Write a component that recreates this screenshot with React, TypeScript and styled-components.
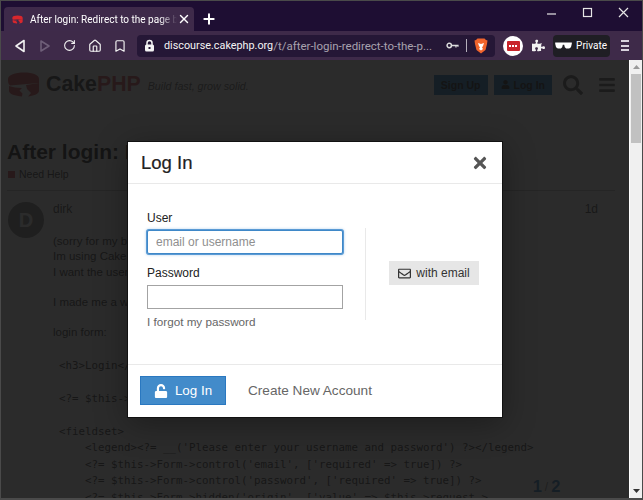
import styled, { createGlobalStyle } from "styled-components";
import { FaBars, FaPuzzlePiece, FaRegEnvelope, FaSearch, FaTimes, FaUnlock, FaUser } from "react-icons/fa";
import { Bookmark, Home, Plus, RotateCw, X } from "lucide-react";

const Global = createGlobalStyle`
  html, body { margin: 0; padding: 0; height: 500px; overflow: hidden; background: #2a2a2a; }
  * { box-sizing: border-box; }
`;

const Windowed = styled.div`
  width: 643px;
  height: 500px;
  display: flex;
  flex-direction: column;
  border: 1px solid #4a4a4a;
  border-bottom-width: 2px;
  font-family: "Liberation Sans", Arial, sans-serif;
  overflow: hidden;
`;

/* browser chrome */
const TabStrip = styled.div`
  height: 30px;
  flex: none;
  display: flex;
  align-items: flex-end;
  padding-left: 3px;
  background: #1e0e33;
  color: #fff;
`;

const Tab = styled.div`
  width: 190px;
  height: 24px;
  display: flex;
  align-items: center;
  padding: 0 3px 0 8px;
  background: #3e2a4a;
  border-radius: 4px 4px 0 0;
  font-family: Roboto, sans-serif;
  font-size: 10px;
`;

const TabTitle = styled.span`
  flex: 1;
  margin-left: 7px;
  white-space: nowrap;
  overflow: hidden;
  -webkit-mask-image: linear-gradient(to right, #000 88%, transparent);
  mask-image: linear-gradient(to right, #000 88%, transparent);
`;

const NewTab = styled.div`
  width: 30px;
  height: 24px;
  display: flex;
  align-items: center;
  justify-content: center;
`;

const WindowControls = styled.div`
  margin-left: auto;
  height: 24px;
  align-self: flex-start;
  display: flex;
  align-items: center;
  gap: 22px;
  padding-right: 11px;
`;

const Toolbar = styled.div`
  height: 29px;
  flex: none;
  display: flex;
  align-items: center;
  background: #3e2a49;
  color: #f2f2f2;
`;

const NavSlot = styled.div`
  width: 25px;
  height: 29px;
  flex: none;
  display: flex;
  align-items: center;
  justify-content: center;
`;

const NavGroup = styled.div`
  display: flex;
  align-items: center;
  padding-left: 6px;
  margin-right: 5px;
`;

const UrlBar = styled.div`
  width: 358px;
  height: 22px;
  flex: none;
  display: flex;
  align-items: center;
  padding: 0 7px;
  background: #251736;
  border-radius: 4px;
  font-family: Roboto, sans-serif;
`;

const Host = styled.span`
  margin-left: 9px;
  font-size: 10.8px;
  color: #f4f4f4;
  white-space: nowrap;
`;

const UrlPath = styled.span`
  font-size: 11.5px;
  color: #a8a2ae;
  white-space: nowrap;
`;

const UrlIcons = styled.div`
  margin-left: auto;
  display: flex;
  align-items: center;
  gap: 7px;
`;

const UrlRule = styled.div`
  width: 1px;
  height: 13px;
  background: #b5afbb;
`;

const ExtBadge = styled.div`
  width: 20px;
  height: 20px;
  margin-left: 8px;
  flex: none;
  border-radius: 50%;
  background: #fff;
  display: flex;
  align-items: center;
  justify-content: center;
`;

const ExtInner = styled.div`
  width: 13px;
  height: 10px;
  border-radius: 1px;
  background: #c9252b;
  display: flex;
  align-items: center;
  justify-content: center;
  gap: 1px;
`;

const Dot = styled.i`
  width: 2px;
  height: 2px;
  background: #fff;
`;

const Puzzle = styled.div`
  margin-left: 9px;
  flex: none;
  display: flex;
  color: #f2f2f2;
`;

const PrivateBadge = styled.div`
  width: 57px;
  height: 22px;
  margin-left: 8px;
  flex: none;
  display: flex;
  align-items: center;
  justify-content: space-between;
  padding: 0 3px 0 2px;
  border-radius: 4px;
  background: #1f1e24;
  font-family: Roboto, sans-serif;
  font-size: 10px;
  color: #fff;
`;

const Menu = styled.div`
  margin-left: 11px;
  flex: none;
  display: flex;
  flex-direction: column;
  gap: 2.5px;
`;

const MenuLine = styled.i`
  display: block;
  width: 8px;
  height: 2px;
  background: #d8d2dc;
`;

/* page behind the modal */
const Viewport = styled.div`
  flex: 1;
  display: flex;
  min-height: 0;
  position: relative;
`;

const Page = styled.div`
  flex: 1;
  min-width: 0;
  position: relative;
  background: #fff;
  overflow: hidden;
`;

const PageInner = styled.div`
  padding: 11px 0 0 6px;
`;

const SiteHeader = styled.div`
  height: 27px;
  display: flex;
  align-items: center;
  padding-right: 13px;
`;

const Wordmark = styled.div`
  margin-left: 6px;
  font-size: 21.3px;
  font-weight: 700;
  color: #222;
`;

const Php = styled.span`
  color: #d33c43;
`;

const Tagline = styled.div`
  margin-left: 7px;
  margin-top: 3px;
  font-size: 10.7px;
  font-style: italic;
  color: #555;
`;

const HeaderButton = styled.div<{ $first?: boolean }>`
  height: 20px;
  margin-left: ${(p) => (p.$first ? "auto" : "6px")};
  padding: 0 7px;
  display: flex;
  align-items: center;
  gap: 4px;
  background: #0f6fb8;
  color: #000;
  font-size: 10.5px;
  font-weight: 700;
`;

const HeaderIcon = styled.div<{ $gap: number }>`
  margin-left: ${(p) => p.$gap}px;
  display: flex;
  color: #555;
`;

const TopicTitle = styled.h1`
  margin: 40px 0 0 0;
  font-size: 21px;
  line-height: 28px;
  font-weight: 700;
  color: #000;
  white-space: nowrap;
`;

const Category = styled.div`
  display: flex;
  align-items: center;
  gap: 4px;
  font-size: 10.5px;
  line-height: 16px;
  padding-left: 1px;
  color: #222;
`;

const Square = styled.i`
  width: 7px;
  height: 7px;
  background: #d33c43;
`;

const Rule = styled.div`
  height: 1px;
  margin: 8px 14px 0 0;
  background: #bbb;
`;

const Post = styled.div`
  display: flex;
  padding-top: 11px;
  padding-right: 31px;
`;

const Avatar = styled.div`
  width: 36px;
  height: 36px;
  margin-left: 1px;
  flex: none;
  border-radius: 50%;
  background: #777;
  color: #fff;
  font-size: 20px;
  font-weight: 700;
  display: flex;
  align-items: center;
  justify-content: center;
`;

const PostBody = styled.div`
  flex: 1;
  min-width: 0;
  margin-left: 9px;
`;

const PostMeta = styled.div`
  display: flex;
  justify-content: space-between;
  font-size: 12px;
  line-height: 15px;
  color: #333;
`;

const Para = styled.p`
  margin: 0 0 14.5px;
  font-size: 11.5px;
  line-height: 15.5px;
  color: #222;
  white-space: nowrap;
`;

const Paras = styled.div`
  padding-top: 16.5px;
`;

const Code = styled.pre`
  margin: 0;
  padding: 3px 0 0 6px;
  font-family: "DejaVu Sans Mono", monospace;
  font-size: 10.8px;
  line-height: 16.5px;
  color: #222;
`;

const Progress = styled.div`
  position: absolute;
  left: 488px;
  bottom: 0;
  width: 115px;
  height: 26px;
  padding-top: 3px;
  background: #fff;
  display: flex;
  align-items: center;
  justify-content: center;
  gap: 3px;
  color: #0f6fb8;
  font-size: 16.5px;
  font-weight: 700;
`;

const ProgressSlash = styled.span`
  font-size: 12px;
  font-weight: 400;
  color: #777;
`;

const Backdrop = styled.div`
  position: absolute;
  inset: 0;
  background: rgba(22, 22, 22, 0.91);
`;

/* modal */
const Dialog = styled.div`
  position: absolute;
  left: 127px;
  top: 82px;
  width: 374px;
  height: 275px;
  display: flex;
  flex-direction: column;
  background: #fff;
  box-shadow: 0 0 0 1px #111, 0 6px 30px rgba(0, 0, 0, 0.35);
`;

const DialogHeader = styled.div`
  height: 42px;
  flex: none;
  display: flex;
  align-items: center;
  justify-content: space-between;
  padding: 0 13px;
  border-bottom: 1px solid #e9e9e9;
`;

const DialogTitle = styled.h3`
  margin: 0;
  font-size: 18.5px;
  font-weight: 500;
  color: #222;
  -webkit-text-stroke: 0.2px #222;
`;

const Close = styled.div`
  display: flex;
  margin-top: 1px;
  color: #555;
`;

const DialogBody = styled.div`
  flex: 1;
  display: flex;
  border-bottom: 1px solid #e9e9e9;
  padding: 27px 0 0 19px;
`;

const FormCol = styled.div`
  width: 196px;
  flex: none;
`;

const Label = styled.label`
  display: block;
  font-size: 12px;
  line-height: 15px;
  margin-bottom: 4px;
  color: #222;
`;

const Input = styled.input<{ $focused?: boolean }>`
  display: block;
  width: 196px;
  height: 24px;
  margin: 0 0 12px;
  padding: 0 8px;
  font-family: inherit;
  font-size: 12px;
  color: #222;
  background: #fff;
  outline: none;
  border-radius: ${(p) => (p.$focused ? "2px" : "0")};
  border: 1px solid ${(p) => (p.$focused ? "#3f88c8" : "#a3a3a3")};
  box-shadow: ${(p) => (p.$focused ? "0 0 0 1px #5b9bd5, 0 0 3px 1px #b7d4ee" : "none")};

  &::placeholder {
    color: #8f8f8f;
    opacity: 1;
  }
`;

const Forgot = styled.div`
  margin-top: -7.5px;
  font-size: 11.7px;
  line-height: 15px;
  color: #666;
`;

const EmailCol = styled.div`
  width: 114px;
  height: 92px;
  margin-left: 22px;
  margin-top: 17px;
  padding-bottom: 2px;
  flex: none;
  display: flex;
  align-items: center;
  justify-content: flex-end;
  border-left: 1px solid #e9e9e9;
`;

const EmailButton = styled.div`
  width: 90px;
  height: 24px;
  display: flex;
  align-items: center;
  justify-content: center;
  gap: 5px;
  background: #e6e6e6;
  color: #333;
  font-size: 12px;
`;

const DialogFooter = styled.div`
  height: 52px;
  flex: none;
  display: flex;
  align-items: flex-start;
  padding: 11px 0 0 12px;
`;

const LoginButton = styled.div`
  width: 86px;
  height: 29px;
  display: flex;
  align-items: center;
  justify-content: center;
  gap: 7px;
  background: #428bca;
  border: 1px solid #2a78c0;
  color: #fff;
  font-size: 13.4px;
`;

const CreateLink = styled.div`
  margin-left: 22px;
  line-height: 29px;
  font-size: 13.6px;
  color: #666;
`;

/* native scrollbar */
const Scrollbar = styled.div`
  width: 13px;
  flex: none;
  display: flex;
  flex-direction: column;
  align-items: center;
  background: #f0f0f0;
  border-left: 1px solid #fff;
`;

const ScrollButton = styled.div`
  height: 14px;
  flex: none;
  display: flex;
  align-items: center;
  justify-content: center;
`;

const ScrollTrack = styled.div`
  flex: 1;
  width: 100%;
  padding: 0 1px;
`;

const Thumb = styled.div`
  height: 69px;
  background: #c1c1c1;
`;

const Cake = () => (
  <svg width="33" height="25" viewBox="0 0 33 25">
    <path d="M1 7C1 3 8 0.5 17 0.5S32 3 32 7v4L3 13.5C1 12 1 10 1 7z" fill="#d33c43" />
    <path d="M2 14c4 1 8 2 13 2l-2.5 2.5 3 3L15 24.5C8 24 2 22 2 19z" fill="#d33c43" />
    <path d="M19 13l13-2v8c0 3-6 5-11 5.500L24 21l-4-4z" fill="#d33c43" />
  </svg>
);

const BackArrow = ({ dim }: { dim?: boolean }) => (
  <svg width="12" height="14" viewBox="0 0 12 14" fill="none" stroke={dim ? "#6f5f79" : "#f2f2f2"} strokeWidth="1.6" strokeLinejoin="round">
    <path d={dim ? "M2 2l8 5-8 5z" : "M10 1.5v11L2 7z"} />
  </svg>
);

const Lock = () => (
  <svg width="11" height="13" viewBox="0 0 11 13">
    <path d="M3 6V4a2.5 2.5 0 0 1 5 0v2" fill="none" stroke="#f4f4f4" strokeWidth="1.5" />
    <rect x="1" y="5.5" width="9" height="7" rx="1.5" fill="#f4f4f4" />
    <rect x="4.5" y="8" width="2" height="2" fill="#251736" />
  </svg>
);

const Key = () => (
  <svg width="13" height="7" viewBox="0 0 16 8">
    <circle cx="4" cy="4" r="2.7" fill="none" stroke="#ddd" strokeWidth="1.8" />
    <path d="M7 3h8.5v2.5H14V5h-1v1.5h-1.5V5H7z" fill="#ddd" />
  </svg>
);

const BraveLion = () => (
  <svg width="14" height="16" viewBox="0 0 14 16">
    <path d="M3.5 0.5h7L12 2l1.500.5L13 6l-1.500 6L7 15.500 2.500 12 1 6 .5 2.500 2 2z" fill="#f0642c" />
    <path d="M4 5l3 1 3-1-1 3-1 1.500 1 1.500-2 1.500L5 11l1-1.500L5 8z" fill="#fff" />
  </svg>
);

const Shades = () => (
  <svg width="17" height="7" viewBox="0 0 19 8">
    <path d="M0 0.5h19V2l-1 4-2 1.5h-3.5L11 6 10.3 3H8.7L8 6 6.5 7.5H3L1 6 0 2z" fill="#fff" />
  </svg>
);

const CODE = `<h3>Login</h3>

<?= $this->Form->create() ?>

<fieldset>
    <legend><?= __('Please enter your username and password') ?></legend>
    <?= $this->Form->control('email', ['required' => true]) ?>
    <?= $this->Form->control('password', ['required' => true]) ?>
    <?= $this->Form->hidden('origin', ['value' => $this->request->`;

export default function App() {
  return (
    <>
      <Global />
      <Windowed>
        <TabStrip>
          <Tab>
            <svg width="11" height="9" viewBox="0 0 33 25">
              <path d="M1 7C1 3 8 .5 17 .5S32 3 32 7v4L3 13.5C1 12 1 10 1 7zM2 14c4 1 8 2 13 2l-2.500 2.500 3 3-.5 3C8 24 2 22 2 19zM19 13l13-2v8c0 3-6 5-11 5.500L24 21l-4-4z" fill="#d8272d" />
            </svg>
            <TabTitle>After login: Redirect to the page before login</TabTitle>
            <X size={14} strokeWidth={2.4} />
          </Tab>
          <NewTab>
            <Plus size={16} strokeWidth={3} />
          </NewTab>
          <WindowControls>
            <svg width="14" height="14" viewBox="0 0 14 14" stroke="#e6e6e6" strokeWidth="1.2" fill="none"><path d="M2 8h9" /></svg>
            <svg width="14" height="14" viewBox="0 0 14 14" stroke="#e6e6e6" strokeWidth="1.2" fill="none"><rect x="2.5" y="2.5" width="8" height="8" /></svg>
            <svg width="14" height="14" viewBox="0 0 14 14" stroke="#e6e6e6" strokeWidth="1.2" fill="none"><path d="M2 2l9 9M11 2l-9 9" /></svg>
          </WindowControls>
        </TabStrip>
        <Toolbar>
          <NavGroup>
            <NavSlot><BackArrow /></NavSlot>
            <NavSlot><BackArrow dim /></NavSlot>
            <NavSlot><RotateCw size={13} strokeWidth={2} /></NavSlot>
            <NavSlot><Home size={14} strokeWidth={2} /></NavSlot>
            <NavSlot><Bookmark size={14} strokeWidth={2} /></NavSlot>
          </NavGroup>
          <UrlBar>
            <Lock />
            <Host>discourse.cakephp.org</Host>
            <UrlPath>/t/after-login-redirect-to-the-p...</UrlPath>
            <UrlIcons>
              <Key />
              <UrlRule />
              <BraveLion />
            </UrlIcons>
          </UrlBar>
          <ExtBadge>
            <ExtInner><Dot /><Dot /><Dot /></ExtInner>
          </ExtBadge>
          <Puzzle><FaPuzzlePiece size={13} /></Puzzle>
          <PrivateBadge><Shades />Private</PrivateBadge>
          <Menu><MenuLine /><MenuLine /><MenuLine /></Menu>
        </Toolbar>
        <Viewport>
          <Page>
            <PageInner>
              <SiteHeader>
                <Cake />
                <Wordmark>Cake<Php>PHP</Php></Wordmark>
                <Tagline>Build fast, grow solid.</Tagline>
                <HeaderButton $first>Sign Up</HeaderButton>
                <HeaderButton><FaUser size={9} />Log In</HeaderButton>
                <HeaderIcon $gap={11}><FaSearch size={20} /></HeaderIcon>
                <HeaderIcon $gap={15}><FaBars size={18} /></HeaderIcon>
              </SiteHeader>
              <TopicTitle>After login: Redirect to the page before login</TopicTitle>
              <Category><Square />Need Help</Category>
              <Rule />
              <Post>
                <Avatar>D</Avatar>
                <PostBody>
                  <PostMeta><span>dirk</span><span>1d</span></PostMeta>
                  <Paras>
                    <Para>
                      (sorry for my bad english)<br />
                      Im using CakePHP 4 and the authentication plugin.<br />
                      I want the user to get redirected to the page he came from after the login form.
                    </Para>
                    <Para>I made me a working login with the docs.</Para>
                    <Para>login form:</Para>
                  </Paras>
                  <Code>{CODE}</Code>
                </PostBody>
              </Post>
            </PageInner>
            <Progress>1<ProgressSlash>/</ProgressSlash>2</Progress>
            <Backdrop />
          </Page>
          <Scrollbar>
            <ScrollButton>
              <svg width="7" height="4" viewBox="0 0 7 4"><path d="M3.5 0L7 4H0z" fill="#9a9a9a" /></svg>
            </ScrollButton>
            <ScrollTrack><Thumb /></ScrollTrack>
            <ScrollButton>
              <svg width="7" height="4" viewBox="0 0 7 4"><path d="M0 0h7L3.5 4z" fill="#333" /></svg>
            </ScrollButton>
          </Scrollbar>
          <Dialog>
            <DialogHeader>
              <DialogTitle>Log In</DialogTitle>
              <Close><FaTimes size={18} /></Close>
            </DialogHeader>
            <DialogBody>
              <FormCol>
                <Label>User</Label>
                <Input $focused placeholder="email or username" readOnly />
                <Label>Password</Label>
                <Input type="password" readOnly />
                <Forgot>I forgot my password</Forgot>
              </FormCol>
              <EmailCol>
                <EmailButton><FaRegEnvelope size={13} />with email</EmailButton>
              </EmailCol>
            </DialogBody>
            <DialogFooter>
              <LoginButton><FaUnlock size={14} />Log In</LoginButton>
              <CreateLink>Create New Account</CreateLink>
            </DialogFooter>
          </Dialog>
        </Viewport>
      </Windowed>
    </>
  );
}
